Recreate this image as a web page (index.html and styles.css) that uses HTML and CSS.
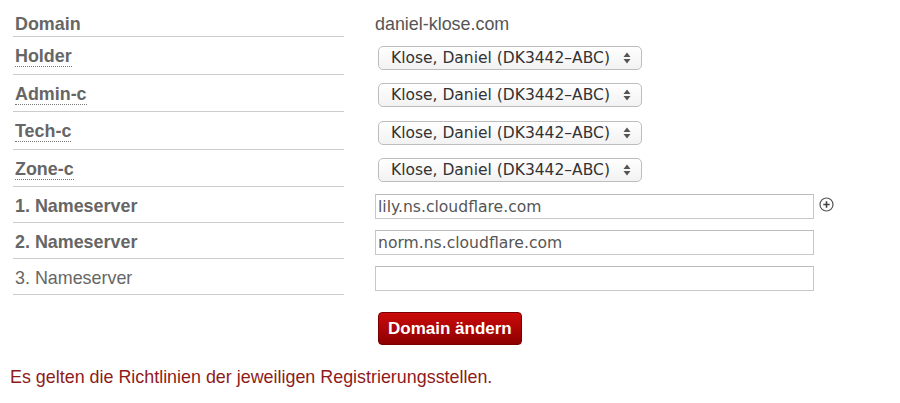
FILE: index.html
```html
<!DOCTYPE html>
<html lang="de">
<head>
    <meta charset="UTF-8">
    <meta name="viewport" content="width=device-width, initial-scale=1.0">
    <title>Domain bearbeiten</title>
    <link rel="stylesheet" href="styles.css">
</head>
<body>
    <form class="domain-form" id="domainForm">
        <div class="field-grid">
            <div class="field-label"><strong>Domain</strong></div>
            <div class="field-value domain-name">daniel-klose.com</div>

            <div class="field-label"><abbr title="Domaininhaber">Holder</abbr></div>
            <div class="field-value">
                <div class="select-wrap">
                    <select name="holder"><option>Klose, Daniel (DK3442–ABC)</option></select>
                    <svg class="select-arrows" width="8" height="12" viewBox="0 0 8 12"><path d="M4 0.5 L7.5 5 L0.5 5 Z M4 11.5 L7.5 7 L0.5 7 Z" fill="#555"/></svg>
                </div>
            </div>

            <div class="field-label"><abbr title="Administrativer Kontakt">Admin-c</abbr></div>
            <div class="field-value">
                <div class="select-wrap">
                    <select name="admin_c"><option>Klose, Daniel (DK3442–ABC)</option></select>
                    <svg class="select-arrows" width="8" height="12" viewBox="0 0 8 12"><path d="M4 0.5 L7.5 5 L0.5 5 Z M4 11.5 L7.5 7 L0.5 7 Z" fill="#555"/></svg>
                </div>
            </div>

            <div class="field-label"><abbr title="Technischer Kontakt">Tech-c</abbr></div>
            <div class="field-value">
                <div class="select-wrap">
                    <select name="tech_c"><option>Klose, Daniel (DK3442–ABC)</option></select>
                    <svg class="select-arrows" width="8" height="12" viewBox="0 0 8 12"><path d="M4 0.5 L7.5 5 L0.5 5 Z M4 11.5 L7.5 7 L0.5 7 Z" fill="#555"/></svg>
                </div>
            </div>

            <div class="field-label"><abbr title="Zonenverwalter">Zone-c</abbr></div>
            <div class="field-value">
                <div class="select-wrap">
                    <select name="zone_c"><option>Klose, Daniel (DK3442–ABC)</option></select>
                    <svg class="select-arrows" width="8" height="12" viewBox="0 0 8 12"><path d="M4 0.5 L7.5 5 L0.5 5 Z M4 11.5 L7.5 7 L0.5 7 Z" fill="#555"/></svg>
                </div>
            </div>

            <div class="field-label"><strong>1. Nameserver</strong></div>
            <div class="field-value">
                <input type="text" name="ns1" value="lily.ns.cloudflare.com">
                <svg class="add-icon" width="15" height="15" viewBox="0 0 15 15">
                    <circle cx="7.5" cy="7.5" r="6.5" fill="none" stroke="#555" stroke-width="1.2"/>
                    <path d="M7.5 4.3 V10.7 M4.3 7.5 H10.7" stroke="#444" stroke-width="1.6"/>
                </svg>
            </div>

            <div class="field-label"><strong>2. Nameserver</strong></div>
            <div class="field-value">
                <input type="text" name="ns2" value="norm.ns.cloudflare.com">
            </div>

            <div class="field-label">3. Nameserver</div>
            <div class="field-value">
                <input type="text" name="ns3" value="">
            </div>

            <div class="field-spacer"></div>
            <div class="field-actions">
                <button type="submit">Domain ändern</button>
            </div>
        </div>
    </form>

    <p class="notice">Es gelten die Richtlinien der jeweiligen Registrierungsstellen.</p>
</body>
</html>
```

FILE: styles.css
```css
body {
    font-family: "Liberation Sans", Arial, sans-serif;
    font-size: 17.9px;
    color: #666;
    background-color: #fff;
    margin: 8px 10px;
}
.field-grid {
    display: grid;
    grid-template-columns: 331px 1fr;
    grid-template-rows: 29px 38px 37px 38px 37px 36px 36px 36px auto;
    column-gap: 31px;
    margin-left: 3px;
}
.field-label {
    display: flex;
    align-items: center;
    box-sizing: border-box;
    padding-left: 2px;
    padding-top: 2px;
    border-bottom: 1px solid #ccc;
    line-height: 20px;
}
.field-label:first-child {
    padding-top: 3px;
}
.field-label strong {
    font-weight: bold;
}
abbr {
    font-weight: bold;
    text-decoration: none;
    border-bottom: 1px dotted #777;
}
.field-value {
    display: flex;
    align-items: center;
    gap: 5px;
}
.domain-name {
    color: #555;
    padding-top: 3px;
}
.select-wrap {
    position: relative;
    margin: 3px 0 0 3px;
}
select {
    -webkit-appearance: none;
    appearance: none;
    width: 264px;
    height: 24px;
    box-sizing: border-box;
    padding: 0 0 0 12px;
    font-family: "DejaVu Sans", sans-serif;
    font-size: 15.5px;
    color: #333;
    background: linear-gradient(#ffffff, #f2f2f2);
    border: 1px solid #bdbdbd;
    border-radius: 5px;
}
.select-arrows {
    position: absolute;
    right: 11px;
    top: 6px;
}
input[type="text"] {
    width: 439px;
    height: 25px;
    box-sizing: border-box;
    margin-top: 3px;
    padding: 0 2px;
    font-family: "DejaVu Sans", sans-serif;
    font-size: 15.6px;
    color: #555;
    border: 1px solid #c8c8c8;
    border-top-color: #bcbcbc;
    background-color: #fff;
}
.add-icon {
    margin-top: -2px;
}
.field-actions {
    padding-top: 17px;
}
button {
    margin-left: 3px;
    height: 33px;
    padding: 0 9px;
    font-family: "Liberation Sans", Arial, sans-serif;
    font-size: 17px;
    font-weight: bold;
    color: #fff;
    background: linear-gradient(#cc0a0a, #8c0000);
    border: 1px solid #7a0000;
    border-radius: 4px;
    cursor: pointer;
}
button:hover {
    background: linear-gradient(#d61515, #990000);
}
.notice {
    color: #8e1b1b;
    margin: 22px 0 0 0;
    line-height: 20px;
}
```
